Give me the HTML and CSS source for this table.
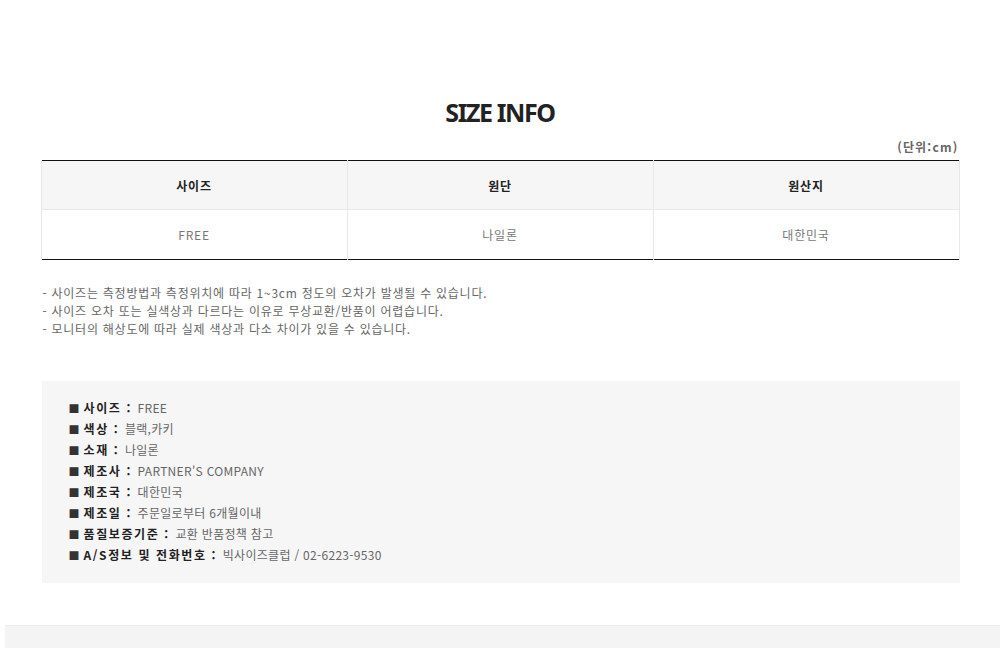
FILE: index.html
```html
<!DOCTYPE html>
<html lang="ko">
<head>
<meta charset="utf-8">
<link rel="stylesheet" href="styles.css">
</head>
<body>
<div class="page">
  <h1 class="title">SIZE INFO</h1>
  <div class="unit">(단위:cm)</div>
  <table class="size-table">
    <thead>
      <tr><th>사이즈</th><th>원단</th><th>원산지</th></tr>
    </thead>
    <tbody>
      <tr><td>FREE</td><td>나일론</td><td>대한민국</td></tr>
    </tbody>
  </table>
  <ul class="notes">
    <li>- 사이즈는 측정방법과 측정위치에 따라 1~3cm 정도의 오차가 발생될 수 있습니다.</li>
    <li>- 사이즈 오차 또는 실색상과 다르다는 이유로 무상교환/반품이 어렵습니다.</li>
    <li>- 모니터의 해상도에 따라 실제 색상과 다소 차이가 있을 수 있습니다.</li>
  </ul>
  <div class="info-box">
    <ul class="info-list">
      <li><span class="sq">■</span><b>사이즈 :</b> FREE</li>
      <li><span class="sq">■</span><b>색상 :</b> 블랙,카키</li>
      <li><span class="sq">■</span><b>소재 :</b> 나일론</li>
      <li><span class="sq">■</span><b>제조사 :</b> PARTNER'S COMPANY</li>
      <li><span class="sq">■</span><b>제조국 :</b> 대한민국</li>
      <li><span class="sq">■</span><b>제조일 :</b> 주문일로부터 6개월이내</li>
      <li><span class="sq">■</span><b>품질보증기준 :</b> 교환 반품정책 참고</li>
      <li><span class="sq">■</span><b>A/S정보 및 전화번호 :</b> 빅사이즈클럽 / 02-6223-9530</li>
    </ul>
  </div>
</div>
<div class="bottom-band"></div>
</body>
</html>
```

FILE: styles.css
```css
html, body {
  margin: 0;
  padding: 0;
  background: #fff;
}
body {
  font-family: "Noto Sans CJK KR", "Noto Sans", sans-serif;
  color: #666;
  overflow: hidden;
  height: 648px;
}
.page {
  width: 919px;
  margin: 0 auto;
  padding-top: 95px;
}
.title {
  margin: 0;
  text-align: center;
  font-family: "Noto Sans", "Noto Sans CJK KR", sans-serif;
  font-weight: 700;
  font-size: 25px;
  line-height: 34px;
  letter-spacing: -1.4px;
  color: #222;
}
.unit {
  text-align: right;
  font-size: 12px;
  font-weight: 700;
  line-height: 18px;
  color: #666;
  margin-top: 9px;
  padding-right: 1px;
  letter-spacing: 1.2px;
}
.size-table {
  width: 100%;
  border-collapse: collapse;
  border-top: 1px solid #111;
  border-bottom: 1px solid #111;
  margin-top: 4px;
  table-layout: fixed;
}
.size-table th,
.size-table td {
  border-left: 1px solid #e8e8e8;
  border-right: 1px solid #e8e8e8;
  text-align: center;
  font-size: 12px;
  padding: 0;
  letter-spacing: 0.8px;
}
.size-table th {
  height: 48px;
  background: #f6f6f6;
  color: #222;
  font-weight: 700;
  border-bottom: 1px solid #e9e9e9;
}
.size-table td {
  height: 49px;
  color: #777;
  background: #fff;
}
.notes {
  list-style: none;
  margin: 24px 0 0;
  padding: 0 0 0 2px;
  font-size: 12px;
  line-height: 18px;
  color: #666;
  letter-spacing: 0.75px;
}
.info-box {
  margin-top: 43px;
  margin-left: 1px;
  background: #f6f6f6;
  height: 202px;
  box-sizing: border-box;
  padding: 16px 0 0 27px;
}
.info-list {
  list-style: none;
  margin: 0;
  padding: 0;
  font-size: 12px;
  color: #666;
}
.info-list li {
  height: 21px;
  line-height: 21px;
  letter-spacing: 0.3px;
}
.info-list b {
  color: #222;
  font-weight: 700;
  margin-right: 2px;
  letter-spacing: 1.6px;
}
.sq {
  color: #333;
  font-size: 11px;
  margin-right: 4px;
  letter-spacing: 0;
}
.bottom-band {
  position: absolute;
  left: 5px;
  right: 0;
  top: 625px;
  height: 23px;
  background: #f4f4f4;
  border-top: 1px solid #ececec;
}
```
